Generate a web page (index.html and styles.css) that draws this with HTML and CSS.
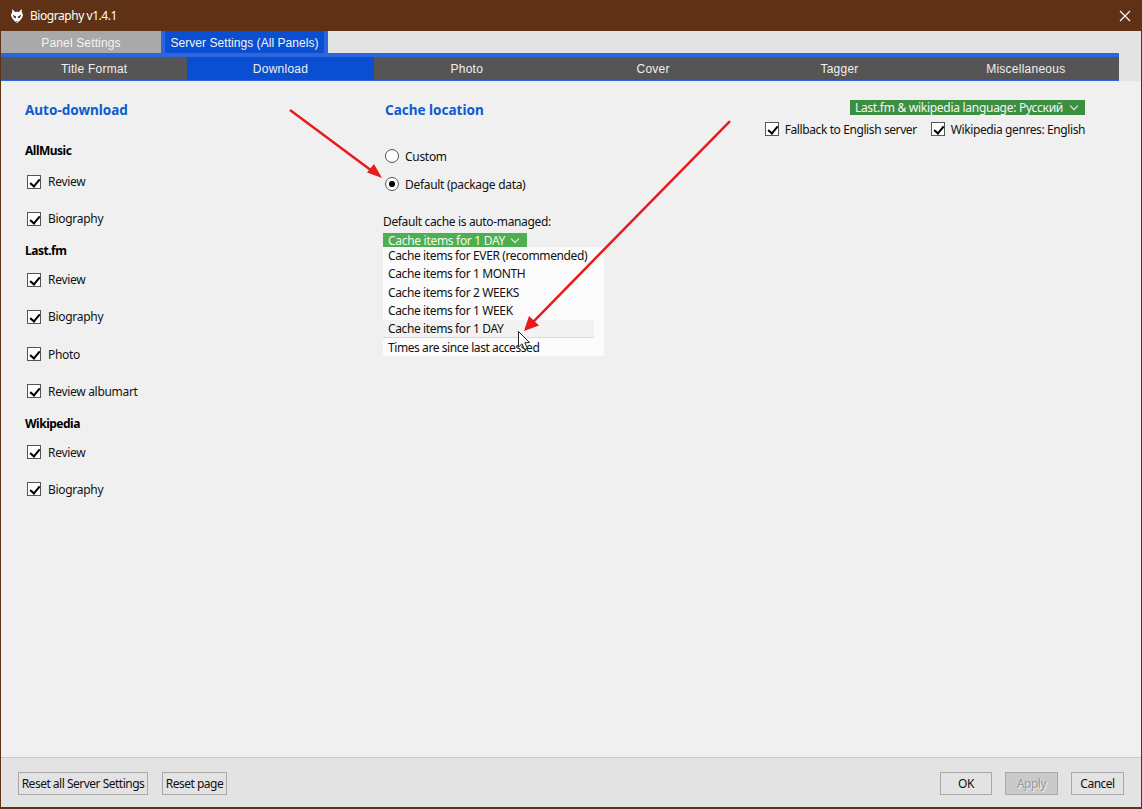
FILE: index.html
```html
<!DOCTYPE html>
<html lang="en">
<head>
    <meta charset="UTF-8">
    <title>Biography v1.4.1</title>
    <link rel="stylesheet" href="styles.css">
</head>
<body>
    <div class="window">
        <div class="titlebar">
            <svg class="logo" width="12" height="14" viewBox="0 0 12 14">
                <path fill="#fff" d="M1.5 0 L4 3 Q6 2.4 8 3 L10.5 0 L11 3.5 L12 6 Q11.5 10 6 14 Q.5 10 0 6 L1 3.5 Z"/>
                <path fill="#2a1a10" d="M1.8 5.8 L5.2 7.8 L4.6 9.6 Q2.4 8.6 1.8 5.8 Z M10.2 5.8 L6.8 7.8 L7.4 9.6 Q9.6 8.6 10.2 5.8 Z M5 12 H7 L6 13 Z"/>
            </svg>
            <span class="title">Biography v1.4.1</span>
            <svg class="close" width="12" height="12" viewBox="0 0 12 12">
                <path stroke="#fff" stroke-width="1.1" d="M1 1 L11 11 M11 1 L1 11"/>
            </svg>
        </div>

        <div class="tabs-area">
            <div class="tabs">
                <div class="tab">Panel Settings</div>
                <div class="tab active">Server Settings (All Panels)</div>
            </div>
            <div class="subtabs">
                <div class="subtab">Title Format</div>
                <div class="subtab active">Download</div>
                <div class="subtab">Photo</div>
                <div class="subtab">Cover</div>
                <div class="subtab">Tagger</div>
                <div class="subtab">Miscellaneous</div>
            </div>
        </div>

        <div class="content">
            <div class="col col-left">
                <h2>Auto-download</h2>
                <h3 class="first">AllMusic</h3>
                <label class="check"><span class="box"></span>Review</label>
                <label class="check"><span class="box"></span>Biography</label>
                <h3>Last.fm</h3>
                <label class="check"><span class="box"></span>Review</label>
                <label class="check"><span class="box"></span>Biography</label>
                <label class="check"><span class="box"></span>Photo</label>
                <label class="check"><span class="box"></span>Review albumart</label>
                <h3>Wikipedia</h3>
                <label class="check"><span class="box"></span>Review</label>
                <label class="check"><span class="box"></span>Biography</label>
            </div>

            <div class="col col-mid">
                <h2>Cache location</h2>
                <div class="radios">
                    <label class="radio"><span class="dot"></span>Custom</label>
                    <label class="radio"><span class="dot on"></span>Default (package data)</label>
                </div>
                <p class="note">Default cache is auto-managed:</p>
                <div class="dropdown">
                    <div class="select">Cache items for 1 DAY <span class="chev"></span></div>
                    <div class="menu">
                        <div class="item">Cache items for EVER (recommended)</div>
                        <div class="item">Cache items for 1 MONTH</div>
                        <div class="item">Cache items for 2 WEEKS</div>
                        <div class="item">Cache items for 1 WEEK</div>
                        <div class="item hover">Cache items for 1 DAY</div>
                        <div class="item last">Times are since last accessed</div>
                    </div>
                </div>
            </div>

            <div class="col col-right">
                <div class="select lang">Last.fm &amp; wikipedia language: Русский <span class="chev"></span></div>
                <div class="lang-opts">
                    <label class="check"><span class="box"></span>Fallback to English server</label>
                    <label class="check"><span class="box"></span>Wikipedia genres: English</label>
                </div>
            </div>
        </div>

        <div class="footer">
            <button class="btn reset-all">Reset all Server Settings</button>
            <button class="btn reset-page">Reset page</button>
            <div class="spacer"></div>
            <button class="btn ok">OK</button>
            <button class="btn wide disabled">Apply</button>
            <button class="btn wide">Cancel</button>
        </div>
    </div>

    <!-- annotation arrows and mouse pointer drawn over the dialog -->
    <svg class="overlay" width="1142" height="809" viewBox="0 0 1142 809">
        <g stroke="#e81b1b" stroke-width="2.5" fill="#e81b1b">
            <path d="M290 110 L372 171"/>
            <path stroke="none" d="M382 178 L367 172.5 L374 164 Z"/>
            <path d="M730 121 L532 323"/>
            <path stroke="none" d="M524 331 L529 316 L539 325.5 Z"/>
        </g>
        <path fill="#fff" stroke="#222" stroke-width="1" d="M518.5 331.5 V347 L522 343.8 L524.6 349.5 L527.4 348.2 L524.8 342.8 L529.5 342.5 Z"/>
    </svg>
</body>
</html>
```

FILE: styles.css
```css
* {
    box-sizing: border-box;
}
body {
    margin: 0;
    font-family: "Noto Sans", Arial, sans-serif;
    font-size: 12px;
    letter-spacing: -.3px;
    color: #111;
    background: #f0f0f0;
}
.window {
    width: 1142px;
    height: 809px;
    display: flex;
    flex-direction: column;
    border: 1px solid #5f3216;
    border-width: 0 1px 2px;
}
.titlebar {
    height: 31px;
    margin: 0 -1px;
    padding: 0 11px;
    display: flex;
    align-items: center;
    background: #5f3216;
    color: #fff;
}
.logo {
    margin-right: 7px;
}
.title {
    flex: 1;
    letter-spacing: -.45px;
}
.tabs-area {
    background: #e3e3e3;
    height: 50px;
}
.tabs {
    display: flex;
    height: 22px;
    width: 327px;
}
.tab {
    font-family: "Liberation Sans", Arial, sans-serif;
    letter-spacing: .15px;
    width: 160px;
    line-height: 24px;
    text-align: center;
    white-space: nowrap;
    background: #a9a9a9;
    color: #f4f4f4;
}
.tab.active {
    width: 167px;
    letter-spacing: .05px;
    background: #0a4fd1;
    border: solid #2c66dc;
    border-width: 0 4px;
}
.subtabs {
    display: flex;
    width: 1118px;
    height: 28px;
    background: #555;
    border-top: 4px solid #2c66dc;
    border-bottom: 1px solid #2c66dc;
}
.subtab {
    flex: 1;
    font-family: "Liberation Sans", Arial, sans-serif;
    letter-spacing: .25px;
    line-height: 25px;
    text-align: center;
    color: #f0f0f0;
}
.subtab.active {
    background: #0a4fd1;
}
.content {
    flex: 1;
    display: flex;
    padding: 19px 56px 0 24px;
    background: #f0f0f0;
}
.col-left {
    width: 360px;
}
.col-mid {
    flex: 1;
}
.col-right {
    width: 340px;
    display: flex;
    flex-direction: column;
    align-items: flex-end;
}
h2 {
    margin: 0;
    font-size: 13.5px;
    line-height: 20px;
    font-weight: 700;
    letter-spacing: 0;
    color: #0a5ccf;
}
h3 {
    margin: 0;
    height: 23.7px;
    line-height: 28px;
    font-size: 12px;
    font-weight: 700;
    letter-spacing: -.5px;
    color: #000;
}
h3.first {
    margin-top: 20px;
    height: 23px;
    line-height: 21px;
}
.check {
    display: flex;
    align-items: center;
    height: 37.2px;
    padding-left: 2px;
    white-space: nowrap;
}
.box {
    position: relative;
    width: 14px;
    height: 14px;
    margin-right: 7px;
    border: 1px solid #555;
    background: #fff;
}
.box::after {
    content: "";
    position: absolute;
    left: 4px;
    top: 1px;
    width: 4px;
    height: 8px;
    border: solid #000;
    border-width: 0 2px 2px 0;
    transform: rotate(40deg);
}
.radios {
    margin-top: 22px;
}
.radio {
    display: flex;
    align-items: center;
    height: 28px;
}
.dot {
    position: relative;
    width: 14px;
    height: 14px;
    margin-right: 6px;
    border: 1px solid #555;
    border-radius: 50%;
    background: #fff;
}
.dot.on::after {
    content: "";
    position: absolute;
    left: 3px;
    top: 3px;
    width: 6px;
    height: 6px;
    border-radius: 50%;
    background: #000;
}
.note {
    margin: 15px 0 0 -2px;
    line-height: 18px;
    letter-spacing: -.35px;
}
.dropdown {
    position: relative;
    margin: 1px 0 0 -2px;
}
.select {
    display: inline-flex;
    align-items: center;
    height: 15px;
    padding: 0 5px;
    background: #4caf50;
    color: #f6f6f6;
    white-space: nowrap;
}
.chev {
    width: 6px;
    height: 6px;
    margin: -3px 4px 0 7px;
    border: solid #f0f0f0;
    border-width: 0 1px 1px 0;
    transform: rotate(45deg);
}
.menu {
    position: absolute;
    left: 0;
    top: 15px;
    width: 221px;
    height: 109px;
    padding-right: 10px;
    letter-spacing: -.38px;
    background: #fbfbfb;
}
.item {
    height: 18.3px;
    line-height: 18px;
    padding-left: 5px;
    white-space: nowrap;
}
.item.hover {
    background: #f2f2f2;
    border-bottom: 1px solid #d9d9d9;
}
.item.last {
    line-height: 20px;
    letter-spacing: -.42px;
}
.lang {
    letter-spacing: -.28px;
    background: #3c8f41;
}
.lang .chev {
    margin: -3px 3px 0 8px;
}
.lang-opts {
    display: flex;
    margin-top: 5px;
    gap: 14px;
    letter-spacing: -.4px;
}
.lang-opts .check {
    height: 18px;
    padding: 0;
}
.lang-opts .box {
    margin-right: 6px;
}
.footer {
    height: 50px;
    display: flex;
    align-items: flex-start;
    gap: 14px;
    padding: 14px 17px 0;
    background: #e3e3e3;
    border-top: 1px solid #c9c9c9;
}
.spacer {
    flex: 1;
}
.btn {
    height: 23px;
    padding: 0;
    font: inherit;
    letter-spacing: -.5px;
    color: #111;
    background: #e3e3e3;
    border: 1px solid #a8a8a8;
}
.reset-all {
    width: 130px;
}
.reset-page {
    width: 65px;
}
.ok {
    width: 52px;
}
.btn.wide {
    width: 53px;
    margin-left: -1px;
}
.btn.disabled {
    background: #cacaca;
    color: #999;
    text-shadow: 1px 1px 0 #eee;
}
.overlay {
    position: absolute;
    left: 0;
    top: 0;
    pointer-events: none;
}
```
